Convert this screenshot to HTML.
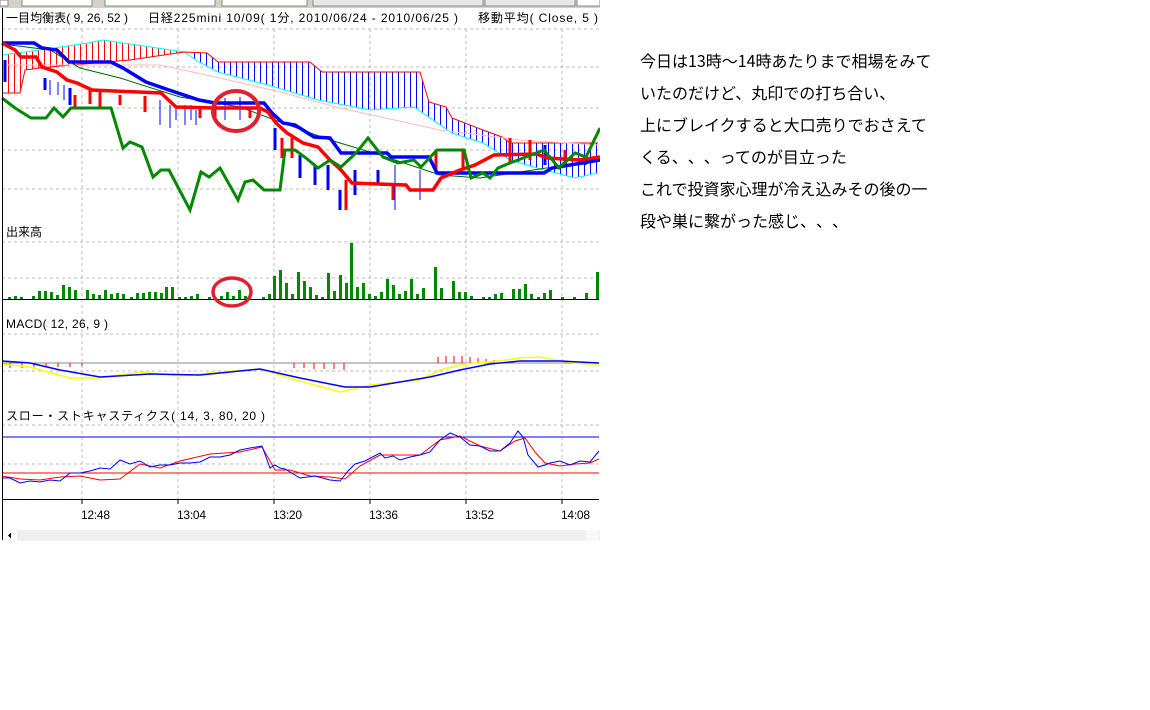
<!DOCTYPE html>
<html><head><meta charset="utf-8"><style>
html,body{margin:0;padding:0;background:#fff;width:1150px;height:710px;overflow:hidden;position:relative;font-family:"Liberation Sans","Noto Sans CJK JP",sans-serif}
.txt{position:absolute;left:640px;top:44px;font-size:16px;line-height:32px;color:#000;white-space:nowrap;font-family:"Noto Sans CJK JP",sans-serif}
.c{display:inline-block;width:16px}
svg{position:absolute;left:0;top:0}
.lbl{font-family:"Liberation Sans","Noto Sans CJK JP",sans-serif;font-size:12px;fill:#000}
</style></head><body>
<svg width="600" height="545" viewBox="0 0 600 545" xmlns="http://www.w3.org/2000/svg">
<defs>
<pattern id="hr" width="6" height="10" patternUnits="userSpaceOnUse"><rect x="2" y="0" width="1" height="10" fill="#f00"/></pattern>
<pattern id="hb" width="6" height="10" patternUnits="userSpaceOnUse"><rect x="2" y="0" width="1" height="10" fill="#00f"/></pattern>
<clipPath id="cl"><rect x="0" y="0" width="190" height="300"/></clipPath>
<clipPath id="cr"><rect x="190" y="0" width="410" height="300"/></clipPath>
</defs>
<rect x="0" y="0" width="600" height="8" fill="#d4d0c8"/>
<rect x="0" y="0" width="8" height="6" fill="#fff" stroke="#888"/>
<rect x="22" y="-2" width="70" height="8" fill="#fff" stroke="#888"/>
<rect x="105" y="-2" width="110" height="8" fill="#fff" stroke="#888"/>
<rect x="222" y="-2" width="85" height="8" fill="#fff" stroke="#888"/>
<rect x="313" y="-2" width="170" height="8" fill="#e8e8e8" stroke="#888"/>
<rect x="485" y="-2" width="90" height="8" fill="#e8e8e8" stroke="#888"/>
<rect x="577" y="-2" width="23" height="8" fill="#fff" stroke="#888"/>
<rect x="0" y="8" width="600" height="532" fill="#fff"/>
<text class="lbl" x="6" y="22" textLength="122" lengthAdjust="spacing">一目均衡表( 9, 26, 52 )</text>
<text class="lbl" x="148" y="22" textLength="310" lengthAdjust="spacing">日経225mini 10/09( 1分, 2010/06/24 - 2010/06/25 )</text>
<text class="lbl" x="478" y="22" textLength="120" lengthAdjust="spacing">移動平均( Close, 5 )</text>
<g stroke="#bbb" stroke-dasharray="3,3" stroke-width="1">
<line x1="82" y1="29" x2="82" y2="499"/><line x1="178" y1="29" x2="178" y2="499"/><line x1="274" y1="29" x2="274" y2="499"/><line x1="370" y1="29" x2="370" y2="499"/><line x1="466" y1="29" x2="466" y2="499"/><line x1="562" y1="29" x2="562" y2="499"/>
<line x1="2" y1="29" x2="599" y2="29"/><line x1="2" y1="67" x2="599" y2="67"/><line x1="2" y1="108" x2="599" y2="108"/><line x1="2" y1="150" x2="599" y2="150"/><line x1="2" y1="189" x2="599" y2="189"/>
<line x1="2" y1="242" x2="599" y2="242"/><line x1="2" y1="278" x2="599" y2="278"/>
<line x1="2" y1="334" x2="599" y2="334"/><line x1="2" y1="371" x2="599" y2="371"/>
<line x1="2" y1="425" x2="599" y2="425"/><line x1="2" y1="464" x2="599" y2="464"/>
</g>
<polygon clip-path="url(#cl)" fill="url(#hr)" points="2,55 40,50 88,43 103,40 184,52 207,53 184,52 130,60 60,66 40,68 25,70 20,93 2,93"/>
<polygon clip-path="url(#cr)" fill="url(#hb)" points="184,52 207,53 218,62 310,62 322,72 420,72 429,102 446,107 452,118 483,130 502,137 510,143 598,143 598,173 575,178 544,170 510,160 483,143 452,133 414,107 370,110 318,100 268,85 218,72 199,62"/>
<polyline fill="none" stroke="#0ff" stroke-width="1" points="2,55 40,50 88,43 103,40 184,52 199,62 218,72 268,85 318,100 370,110 414,107 452,133 483,143 510,160 544,170 575,178 598,173"/>
<polyline fill="none" stroke="#f00" stroke-width="1" points="2,93 20,93 25,70 40,68 60,66 130,60 184,52 207,53 218,62 310,62 322,72 420,72 429,102 446,107 452,118 483,130 502,137 510,143 598,143"/>
<polyline fill="none" stroke="#fbb" stroke-width="1" points="2,65 160,65 220,78 280,92 340,108 440,130 520,140 599,145"/>
<polyline fill="none" stroke="#060" stroke-width="1" points="2,44 50,50 80,68 120,78 180,97 240,107 280,122 330,140 380,155 440,175 480,178 520,172 599,160"/>
<g stroke-width="3">
<line x1="5" y1="60" x2="5" y2="82" stroke="#00f"/><line x1="45" y1="78" x2="45" y2="90" stroke="#00f"/><line x1="70" y1="88" x2="70" y2="105" stroke="#00f"/><line x1="75" y1="95" x2="75" y2="108" stroke="#f00"/><line x1="90" y1="90" x2="90" y2="104" stroke="#f00"/><line x1="100" y1="92" x2="100" y2="108" stroke="#f00"/><line x1="120" y1="95" x2="120" y2="105" stroke="#f00"/><line x1="145" y1="96" x2="145" y2="112" stroke="#f00"/><line x1="200" y1="106" x2="200" y2="118" stroke="#f00"/><line x1="215" y1="105" x2="215" y2="118" stroke="#f00"/><line x1="250" y1="108" x2="250" y2="118" stroke="#f00"/>
<line x1="275" y1="128" x2="275" y2="150" stroke="#00f"/><line x1="282" y1="138" x2="282" y2="158" stroke="#f00"/><line x1="292" y1="138" x2="292" y2="158" stroke="#f00"/><line x1="300" y1="155" x2="300" y2="178" stroke="#00f"/><line x1="315" y1="165" x2="315" y2="185" stroke="#00f"/><line x1="328" y1="165" x2="328" y2="190" stroke="#00f"/><line x1="340" y1="190" x2="340" y2="210" stroke="#00f"/><line x1="346" y1="180" x2="346" y2="210" stroke="#f00"/><line x1="355" y1="170" x2="355" y2="195" stroke="#00f"/><line x1="378" y1="170" x2="378" y2="185" stroke="#00f"/><line x1="393" y1="185" x2="393" y2="200" stroke="#f00"/><line x1="436" y1="150" x2="436" y2="170" stroke="#f00"/><line x1="463" y1="150" x2="463" y2="168" stroke="#f00"/><line x1="510" y1="138" x2="510" y2="162" stroke="#f00"/><line x1="530" y1="140" x2="530" y2="160" stroke="#f00"/><line x1="545" y1="145" x2="545" y2="165" stroke="#00f"/><line x1="565" y1="150" x2="565" y2="162" stroke="#f00"/><line x1="585" y1="155" x2="585" y2="165" stroke="#00f"/>
</g>
<g stroke-width="1" stroke="#00f"><line x1="160" y1="100" x2="160" y2="125"/><line x1="170" y1="105" x2="170" y2="128"/><line x1="185" y1="105" x2="185" y2="125"/><line x1="196" y1="110" x2="196" y2="125"/><line x1="225" y1="98" x2="225" y2="120"/><line x1="240" y1="97" x2="240" y2="120"/><line x1="395" y1="165" x2="395" y2="210"/><line x1="420" y1="170" x2="420" y2="200"/><line x1="50" y1="80" x2="50" y2="95"/><line x1="58" y1="82" x2="58" y2="95"/><line x1="64" y1="85" x2="64" y2="100"/><line x1="176" y1="105" x2="176" y2="120"/><line x1="191" y1="105" x2="191" y2="120"/></g>
<polyline fill="none" stroke="#00f" stroke-width="3.5" points="2,43 34,43 42,48 57,50 69,62 111,62 123,68 146,82 169,90 199,100 215,103 264,103 272,113 283,123 295,125 314,137 330,138 341,153 387,153 391,157 429,157 437,173 544,173 552,168 600,160"/>
<polyline fill="none" stroke="#f00" stroke-width="3.5" points="2,43 15,50 21,57 36,57 42,67 57,72 67,80 77,83 92,90 161,93 176,107 215,108 260,108 268,112 276,123 287,133 303,143 318,147 330,160 341,170 352,183 406,185 410,190 433,190 441,178 460,170 475,165 494,155 536,154 548,158 579,160 600,157"/>
<polyline fill="none" stroke="#080" stroke-width="3" points="2,98 15,108 31,118 46,118 54,108 63,117 71,108 111,108 123,148 130,142 142,147 153,177 161,170 169,170 190,210 201,172 209,177 220,168 238,200 245,182 253,180 264,190 280,190 285,150 295,150 306,158 318,168 330,160 341,167 356,153 368,138 383,157 398,163 414,160 421,167 437,150 464,150 471,178 483,173 490,178 498,168 510,163 544,150 559,168 575,153 586,157 600,128"/>
<ellipse cx="236" cy="111" rx="23" ry="20" fill="none" stroke="#e02030" stroke-width="4"/>
<text class="lbl" x="6" y="236">出来高</text>
<g fill="#080">
<rect x="8" y="297" width="3" height="2"/><rect x="14" y="296" width="3" height="3"/><rect x="20" y="297" width="3" height="2"/><rect x="32" y="296" width="3" height="3"/><rect x="38" y="291" width="3" height="8"/><rect x="44" y="291" width="3" height="8"/><rect x="50" y="292" width="3" height="7"/><rect x="56" y="295" width="3" height="4"/><rect x="62" y="285" width="3" height="14"/><rect x="68" y="287" width="3" height="12"/><rect x="74" y="290" width="3" height="9"/><rect x="86" y="290" width="3" height="9"/><rect x="92" y="294" width="3" height="5"/><rect x="98" y="295" width="3" height="4"/><rect x="104" y="290" width="3" height="9"/><rect x="110" y="294" width="3" height="5"/><rect x="116" y="293" width="3" height="6"/><rect x="122" y="294" width="3" height="5"/><rect x="130" y="297" width="3" height="2"/><rect x="136" y="293" width="3" height="6"/><rect x="142" y="293" width="3" height="6"/><rect x="148" y="292" width="3" height="7"/><rect x="154" y="292" width="3" height="7"/><rect x="160" y="293" width="3" height="6"/><rect x="165" y="287" width="3" height="12"/><rect x="171" y="287" width="3" height="12"/><rect x="178" y="297" width="3" height="2"/><rect x="184" y="297" width="3" height="2"/><rect x="190" y="296" width="3" height="3"/><rect x="196" y="294" width="3" height="5"/><rect x="208" y="297" width="3" height="2"/><rect x="220" y="296" width="3" height="3"/><rect x="226" y="292" width="3" height="7"/><rect x="232" y="296" width="3" height="3"/><rect x="238" y="290" width="3" height="9"/><rect x="244" y="296" width="3" height="3"/><rect x="262" y="297" width="3" height="2"/><rect x="268" y="294" width="3" height="5"/><rect x="273" y="276" width="3" height="23"/><rect x="279" y="270" width="3" height="29"/><rect x="285" y="283" width="3" height="16"/><rect x="291" y="294" width="3" height="5"/><rect x="297" y="272" width="3" height="27"/><rect x="303" y="281" width="3" height="18"/><rect x="309" y="287" width="3" height="12"/><rect x="315" y="295" width="3" height="4"/><rect x="321" y="297" width="3" height="2"/><rect x="327" y="273" width="3" height="26"/><rect x="333" y="291" width="3" height="8"/><rect x="339" y="275" width="3" height="24"/><rect x="345" y="283" width="3" height="16"/><rect x="350" y="243" width="3" height="56"/><rect x="356" y="287" width="3" height="12"/><rect x="362" y="283" width="3" height="16"/><rect x="368" y="294" width="3" height="5"/><rect x="374" y="296" width="3" height="3"/><rect x="380" y="292" width="3" height="7"/><rect x="386" y="279" width="3" height="20"/><rect x="392" y="285" width="3" height="14"/><rect x="398" y="294" width="3" height="5"/><rect x="404" y="291" width="3" height="8"/><rect x="410" y="279" width="3" height="20"/><rect x="416" y="294" width="3" height="5"/><rect x="422" y="288" width="3" height="11"/><rect x="434" y="267" width="3" height="32"/><rect x="440" y="288" width="3" height="11"/><rect x="452" y="281" width="3" height="18"/><rect x="458" y="292" width="3" height="7"/><rect x="464" y="292" width="3" height="7"/><rect x="470" y="296" width="3" height="3"/><rect x="482" y="297" width="3" height="2"/><rect x="488" y="297" width="3" height="2"/><rect x="494" y="294" width="3" height="5"/><rect x="500" y="293" width="3" height="6"/><rect x="512" y="289" width="3" height="10"/><rect x="518" y="289" width="3" height="10"/><rect x="524" y="284" width="3" height="15"/><rect x="530" y="294" width="3" height="5"/><rect x="537" y="297" width="3" height="2"/><rect x="543" y="293" width="3" height="6"/><rect x="549" y="290" width="3" height="9"/><rect x="561" y="297" width="3" height="2"/><rect x="573" y="297" width="3" height="2"/><rect x="585" y="293" width="3" height="6"/><rect x="596" y="272" width="3" height="27"/>
</g>
<line x1="2" y1="299.5" x2="599" y2="299.5" stroke="#000"/>
<ellipse cx="232" cy="292" rx="19" ry="14" fill="none" stroke="#e02030" stroke-width="3.5"/>
<text class="lbl" x="6" y="328" textLength="102" lengthAdjust="spacing">MACD( 12, 26, 9 )</text>
<line x1="2" y1="363" x2="599" y2="363" stroke="#888"/>
<g stroke="#f00" stroke-width="1">
<line x1="10" y1="363" x2="10" y2="368"/><line x1="22" y1="363" x2="22" y2="368"/><line x1="34" y1="363" x2="34" y2="367"/><line x1="46" y1="363" x2="46" y2="367"/><line x1="58" y1="363" x2="58" y2="367"/><line x1="70" y1="363" x2="70" y2="367"/><line x1="82" y1="363" x2="82" y2="366"/><line x1="294" y1="363" x2="294" y2="368"/><line x1="304" y1="363" x2="304" y2="368"/><line x1="314" y1="363" x2="314" y2="369"/><line x1="324" y1="363" x2="324" y2="369"/><line x1="334" y1="363" x2="334" y2="369"/><line x1="344" y1="363" x2="344" y2="370"/><line x1="438" y1="363" x2="438" y2="357"/><line x1="446" y1="363" x2="446" y2="356"/><line x1="454" y1="363" x2="454" y2="356"/><line x1="462" y1="363" x2="462" y2="356"/><line x1="470" y1="363" x2="470" y2="357"/><line x1="478" y1="363" x2="478" y2="358"/><line x1="486" y1="363" x2="486" y2="359"/><line x1="494" y1="363" x2="494" y2="360"/>
</g>
<polyline fill="none" stroke="#ff0" stroke-width="1.5" points="2,364 30,367 70,378 100,378 140,372 180,376 220,372 260,369 300,381 340,392 370,385 420,380 440,370 465,364 490,362 520,358 540,357 560,361 585,364 599,364"/>
<polyline fill="none" stroke="#00f" stroke-width="1.5" points="2,361 30,363 60,370 100,377 150,374 200,375 260,369 300,378 345,387 370,387 400,382 430,377 460,370 490,364 520,361 560,361 599,363"/>
<text class="lbl" x="6" y="420" textLength="259" lengthAdjust="spacing">スロー・ストキャスティクス( 14, 3, 80, 20 )</text>
<line x1="2" y1="437" x2="599" y2="437" stroke="#00f"/>
<line x1="2" y1="473" x2="599" y2="473" stroke="#f00"/>
<polyline fill="none" stroke="#f00" points="2,476 20,479 40,480 60,477 80,476 100,480 120,479 140,464 160,468 180,461 210,454 240,452 262,447 275,470 290,470 310,476 330,477 345,479 360,466 380,455 400,455 420,455 440,440 460,436 480,446 500,451 515,441 525,438 535,452 545,463 560,466 575,464 590,463 599,459"/>
<polyline fill="none" stroke="#00f" points="2,478 10,478 20,483 30,481 40,482 50,480 60,481 70,473 80,473 90,471 100,468 110,469 120,460 130,464 140,461 150,467 160,465 170,465 180,463 190,463 200,462 210,457 220,457 230,455 240,450 250,448 262,446 270,468 275,465 280,468 285,469 300,478 315,476 330,480 340,481 348,471 355,464 365,461 380,453 385,458 393,456 400,460 410,457 420,455 430,452 440,440 450,433 460,437 470,445 480,446 490,451 500,451 510,443 518,431 523,437 528,455 538,467 545,465 550,463 560,461 570,465 580,461 590,462 599,451"/>
<line x1="2.5" y1="8" x2="2.5" y2="540" stroke="#000"/>
<line x1="2" y1="499.5" x2="599" y2="499.5" stroke="#000"/>
<g stroke="#000"><line x1="82" y1="499" x2="82" y2="504"/><line x1="178" y1="499" x2="178" y2="504"/><line x1="274" y1="499" x2="274" y2="504"/><line x1="370" y1="499" x2="370" y2="504"/><line x1="466" y1="499" x2="466" y2="504"/><line x1="562" y1="499" x2="562" y2="504"/></g>
<text class="lbl" x="81" y="519" textLength="29">12:48</text><text class="lbl" x="177" y="519" textLength="29">13:04</text><text class="lbl" x="273" y="519" textLength="29">13:20</text><text class="lbl" x="369" y="519" textLength="29">13:36</text><text class="lbl" x="465" y="519" textLength="29">13:52</text><text class="lbl" x="561" y="519" textLength="29">14:08</text>
<rect x="3" y="530" width="597" height="11" fill="#f0f0f0"/>
<rect x="3" y="530" width="14" height="11" fill="#fff"/>
<polygon points="8,535.5 11,532.5 11,538.5" fill="#000"/>
<rect x="586" y="530" width="13" height="11" fill="#f8f8f8"/>
</svg>
<div class="txt">今日は13時～14時あたりまで相場をみて<br>いたのだけど、丸印での打ち合い、<br>上にブレイクすると大口売りでおさえて<br>くる<span class="c">、</span><span class="c">、</span><span class="c">、</span>ってのが目立った<br>これで投資家心理が冷え込みその後の一<br>段や巣に繋がった感じ<span class="c">、</span><span class="c">、</span><span class="c">、</span></div>
</body></html>
